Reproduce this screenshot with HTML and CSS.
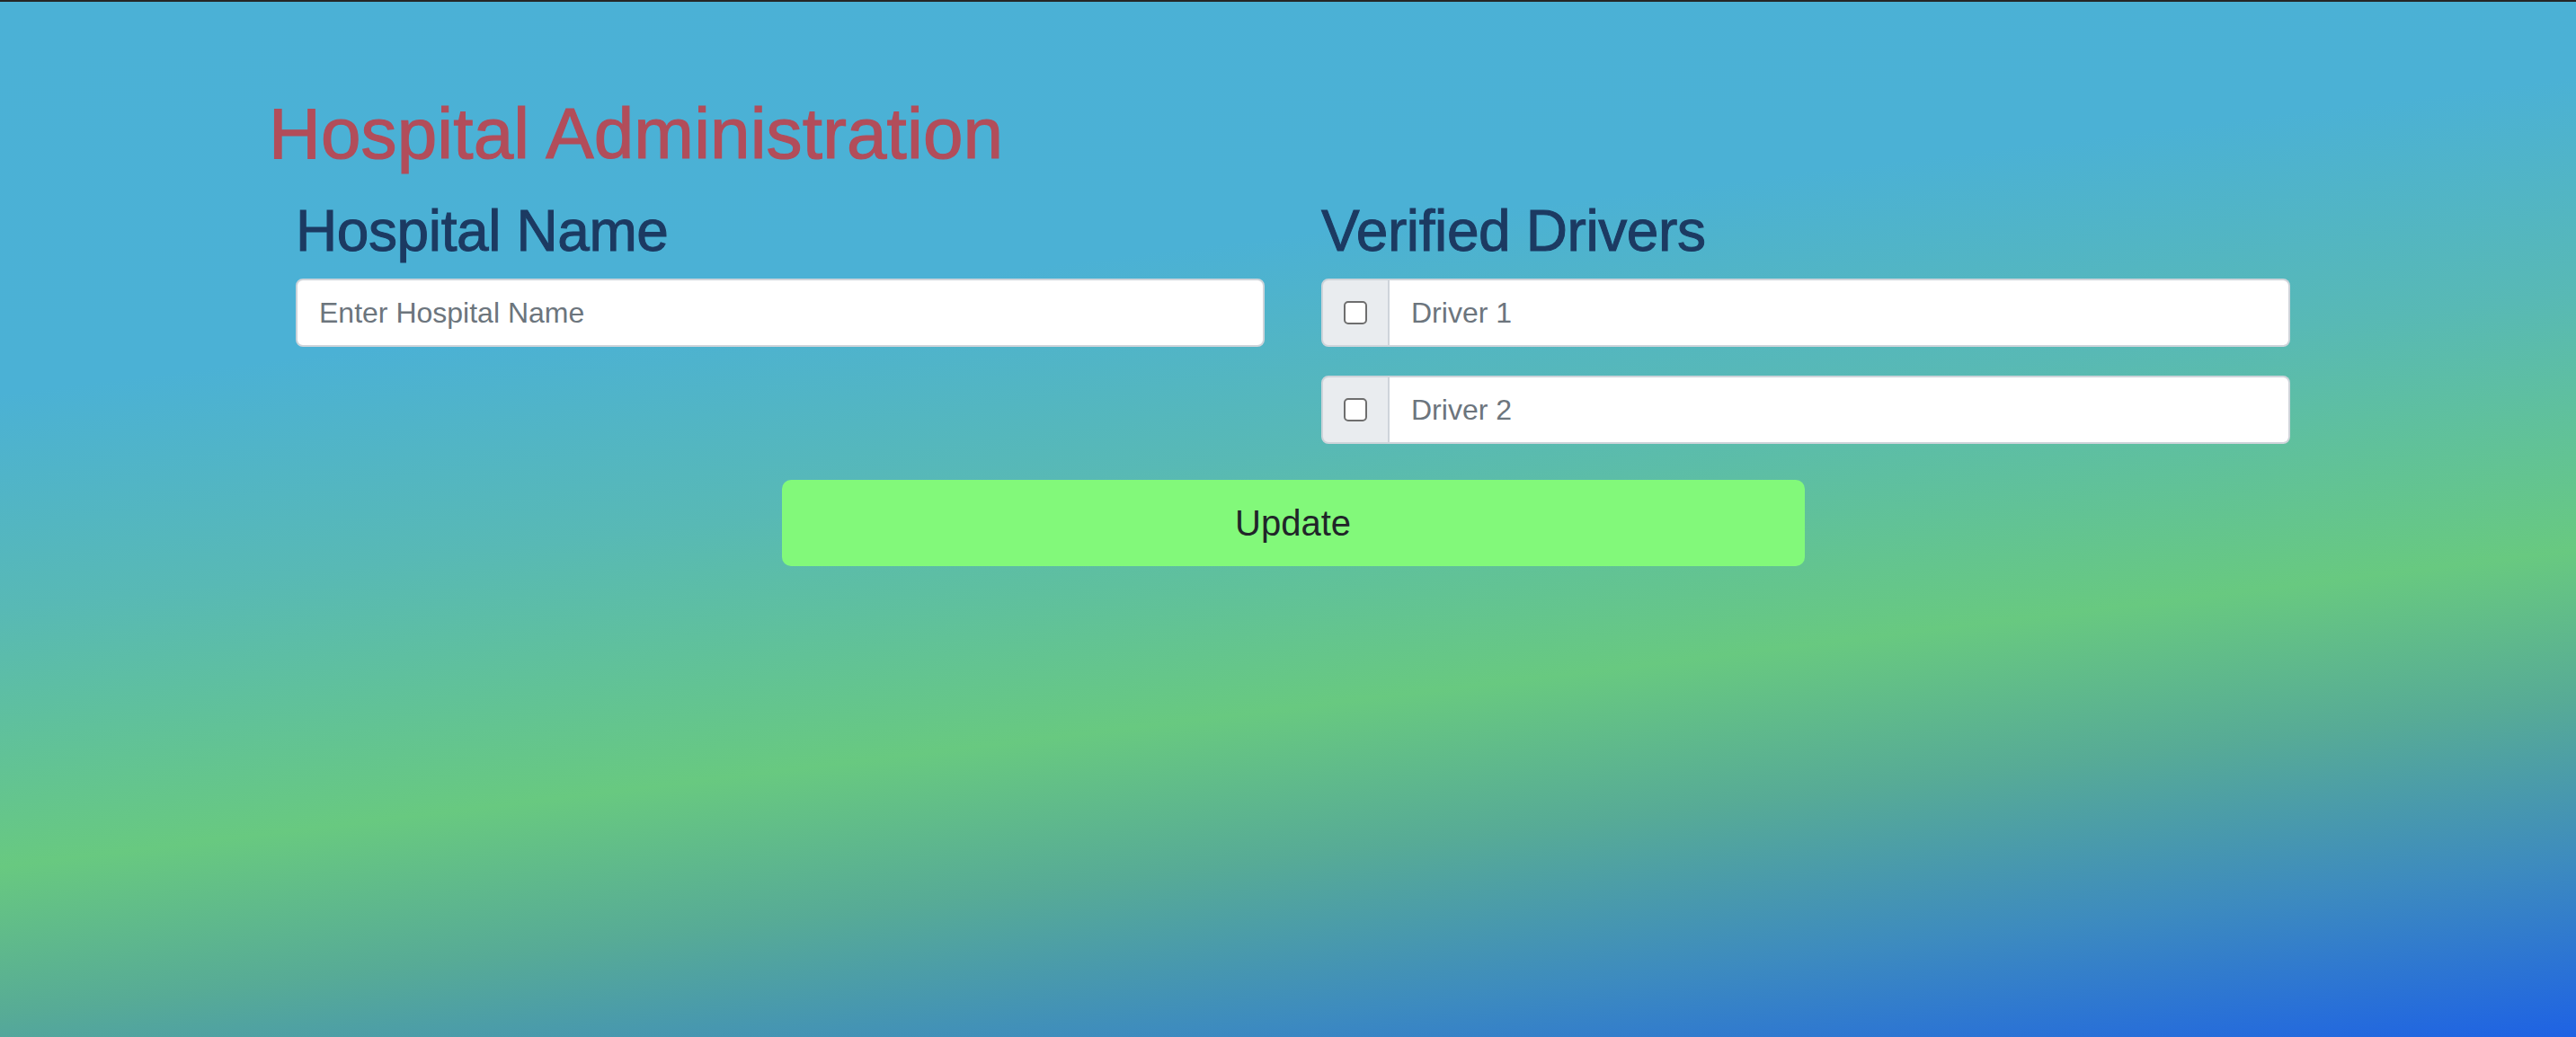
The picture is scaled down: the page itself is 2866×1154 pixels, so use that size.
FILE: index.html
```html
<!DOCTYPE html>
<html lang="en">
<head>
<meta charset="utf-8">
<title>Hospital Administration</title>
<link rel="stylesheet" href="styles.css">
</head>
<body>
<div class="page">
  <div class="container">
    <h1 class="title">Hospital Administration</h1>
    <form class="form-grid">
      <div class="col">
        <h2 class="col-heading">Hospital Name</h2>
        <input class="form-control" type="text" placeholder="Enter Hospital Name">
      </div>
      <div class="col">
        <h2 class="col-heading">Verified Drivers</h2>
        <div class="input-group">
          <div class="addon"><input class="check" type="checkbox"></div>
          <input class="form-control grouped" type="text" placeholder="Driver 1">
        </div>
        <div class="input-group">
          <div class="addon"><input class="check" type="checkbox"></div>
          <input class="form-control grouped" type="text" placeholder="Driver 2">
        </div>
      </div>
      <div class="actions">
        <button class="btn-update" type="button">Update</button>
      </div>
    </form>
  </div>
</div>
</body>
</html>
```

FILE: styles.css
```css
* { box-sizing: border-box; }

html, body {
  margin: 0;
  padding: 0;
}

body {
  font-family: "Liberation Sans", Arial, sans-serif;
  color: #212529;
}

.page {
  height: 100vh;
  border-top: 2px solid #262626;
  background: linear-gradient(173deg,
    #4bb1d6 0%,
    #4bb1d5 29%,
    #58b9b5 45%,
    #68c980 64%,
    #57ab96 75%,
    #3d8bbf 87%,
    #1e62e4 100%);
  overflow: hidden;
}

.container {
  padding: 99px 0 0 299px;
}

.title {
  margin: 0 0 22px 0;
  font-size: 80px;
  line-height: 96px;
  font-weight: 400;
  color: #b24d5a;
  -webkit-text-stroke: 1.2px #b24d5a;
  letter-spacing: 0.15px;
}

.form-grid {
  display: grid;
  grid-template-columns: 1078px 1078px;
  column-gap: 63px;
  margin-left: 30px;
}

.col-heading {
  margin: 0 0 14px 0;
  font-size: 64px;
  line-height: 77px;
  font-weight: 400;
  color: #1c3a62;
  -webkit-text-stroke: 1px #1c3a62;
  letter-spacing: -0.4px;
}

.form-control {
  display: block;
  width: 100%;
  height: 76px;
  padding: 0 24px;
  font-family: "Liberation Sans", Arial, sans-serif;
  font-size: 32px;
  color: #495057;
  background: #ffffff;
  border: 2px solid #ced4da;
  border-radius: 8px;
  outline: none;
}

.form-control::placeholder {
  color: #6c757d;
  opacity: 1;
}

.input-group {
  display: flex;
  height: 76px;
  margin-bottom: 32px;
}

.input-group:last-child {
  margin-bottom: 0;
}

.addon {
  flex: 0 0 76px;
  display: flex;
  align-items: center;
  justify-content: center;
  background: #e9ecef;
  border: 2px solid #ced4da;
  border-radius: 8px 0 0 8px;
}

.check {
  appearance: none;
  -webkit-appearance: none;
  margin: 0;
  width: 26px;
  height: 26px;
  background: #ffffff;
  border: 2px solid #6e6e6e;
  border-radius: 5px;
}

.grouped {
  flex: 1 1 auto;
  border-left: none;
  border-radius: 0 8px 8px 0;
}

.actions {
  grid-column: 1 / span 2;
  display: flex;
  justify-content: center;
  margin-top: 40px;
}

.btn-update {
  width: 1138px;
  height: 96px;
  padding: 0;
  font-family: "Liberation Sans", Arial, sans-serif;
  font-size: 40px;
  color: #212529;
  background: #82f97a;
  border: none;
  border-radius: 10px;
  cursor: pointer;
}
```
